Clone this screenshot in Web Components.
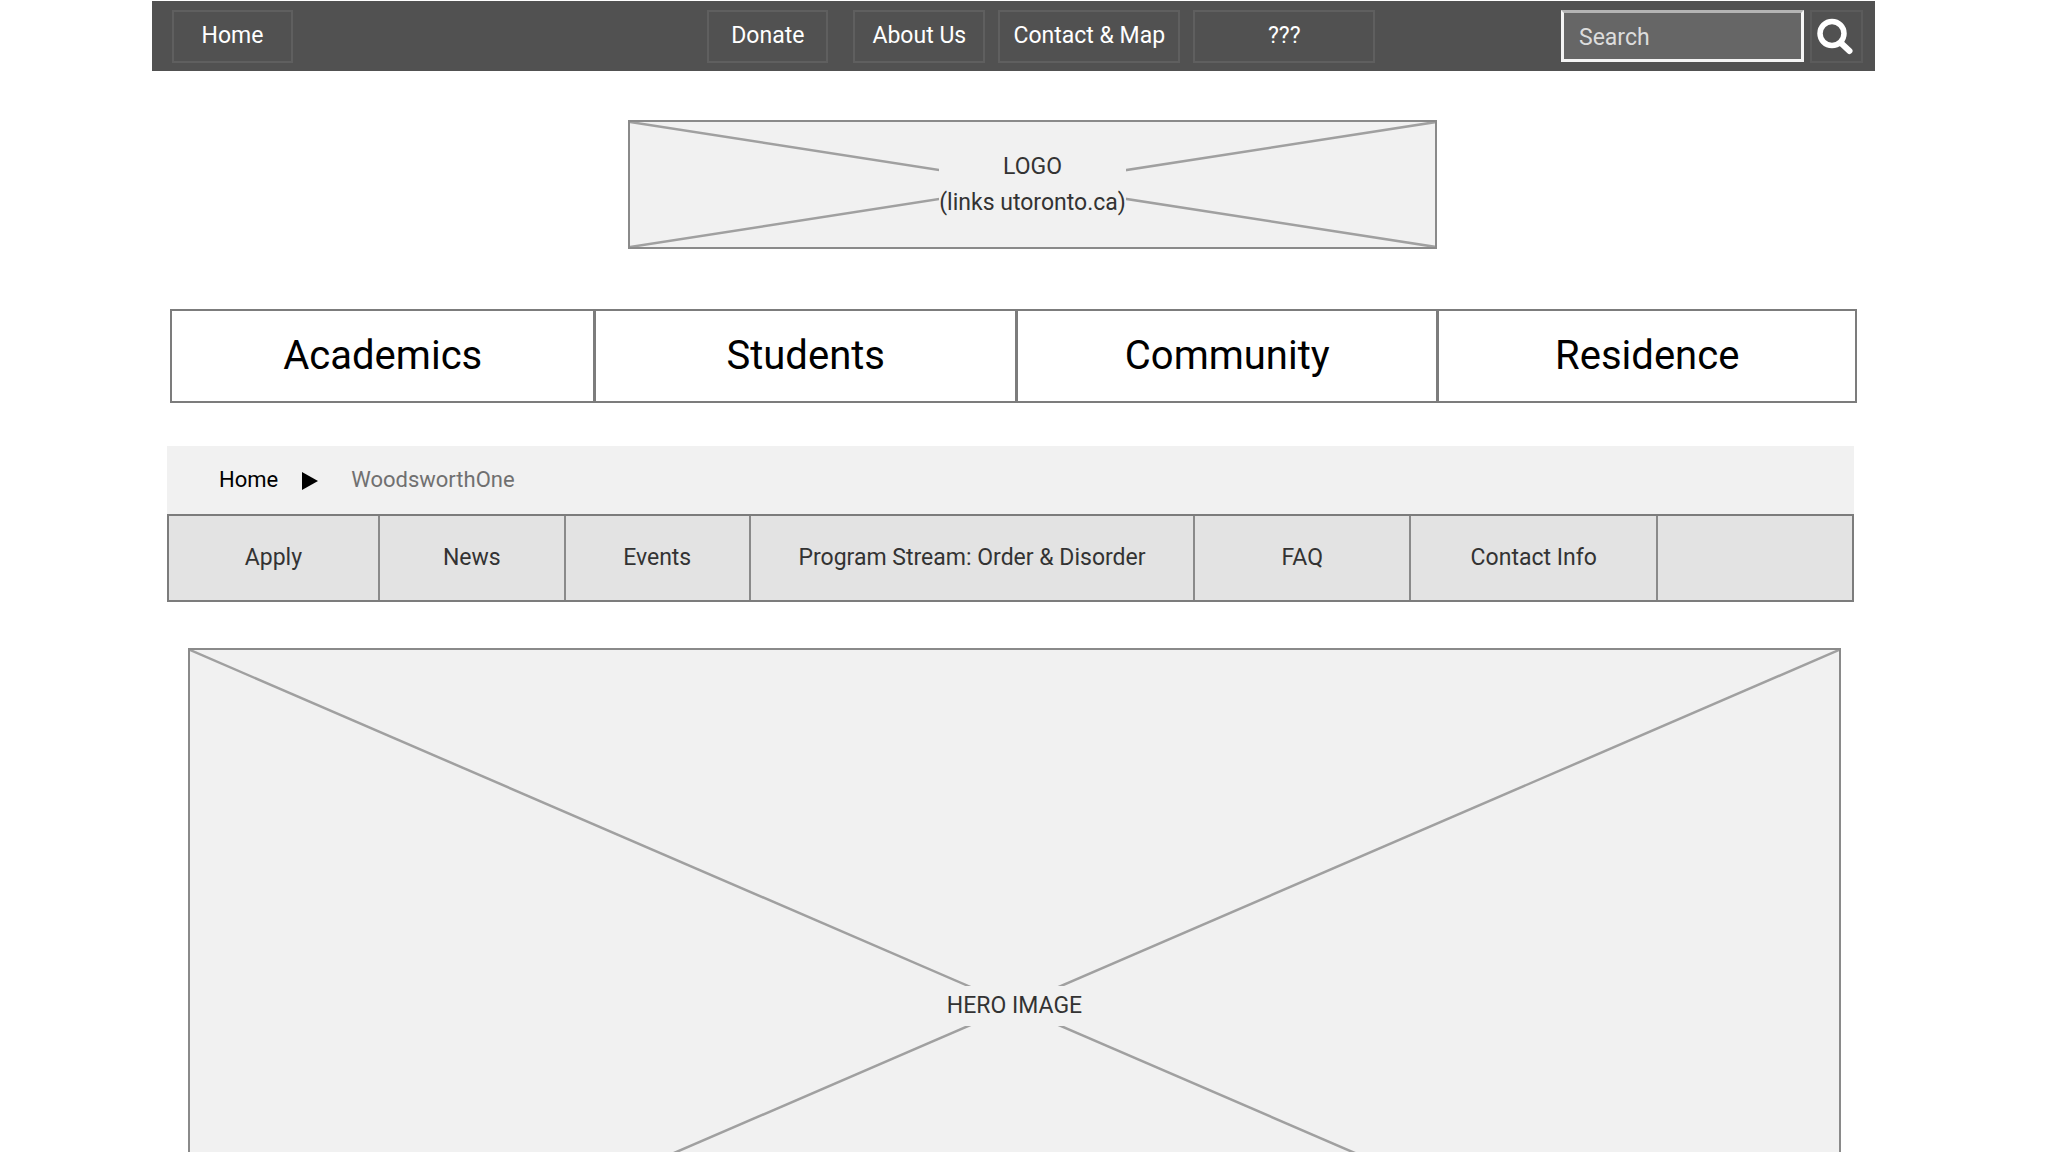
<!DOCTYPE html>
<html lang="en">
<head>
<meta charset="utf-8">
<title>WoodsworthOne</title>
<style>
  body {
    margin: 0;
    background: #fff;
    color: #333;
    font: 23px/36px Roboto, "Liberation Sans", sans-serif;
    --line: #7c7c7c;
    --panel: #f1f1f1;
  }
</style>
</head>
<body>
<wf-page>
  <wf-topbar></wf-topbar>
  <wf-placeholder class="logo" href="#utoronto">LOGO<br>(links utoronto.ca)</wf-placeholder>
  <wf-tabs></wf-tabs>
  <wf-section-nav></wf-section-nav>
  <wf-placeholder class="hero">HERO IMAGE</wf-placeholder>
</wf-page>

<script>
const define = (name, html) => {
  const template = document.createElement('template');
  template.innerHTML = '<style>*{box-sizing:border-box}a{color:inherit;text-decoration:none}</style>' + html;
  customElements.define(name, class extends HTMLElement {
    constructor() {
      super();
      this.attachShadow({ mode: 'open' }).append(template.content.cloneNode(true));
    }
    connectedCallback() {
      const link = this.shadowRoot.querySelector('a[data-host]');
      if (link && this.hasAttribute('href')) link.href = this.getAttribute('href');
    }
  });
};

define('wf-page', `
  <style>
    :host { display: flex; flex-direction: column; padding: 1px 173px 0 152px; }
    ::slotted(wf-tabs) { margin: 60px 18px 0; }
    ::slotted(wf-section-nav) { margin: 43px 21px 0 15px; }
    ::slotted(.logo) { align-self: center; width: 47%; height: 129px; margin: 49px 0 0 38px; --label-width: 184px; --label-height: 72px; }
    ::slotted(.hero) { margin: 46px 34px 0 36px; aspect-ratio: 1653 / 716; --label-width: 160px; --label-height: 40px; }
  </style>
  <slot></slot>`);

define('wf-topbar', `
  <style>
    :host { display: flex; align-items: center; height: 70px; padding: 0 12px 0 20px; background: #515151; color: #fff; }
    a { display: flex; align-items: center; justify-content: center; height: 53px; border: 2px solid #5f5f5f; }
    nav { display: contents; }
    .s { width: 121px; } .m { width: 132px; } .l { width: 182px; }
    .links { display: flex; gap: 13px; }
    .links .s { margin-right: 12px; }
    .wide { flex: 415; } .narrow { flex: 186; }
    form { display: flex; align-items: center; gap: 6px; margin: 0; }
    input { width: 243px; height: 52px; margin: 0; padding: 2px 15px 0; border: 3px solid #f4f4f4; border-top-color: #b4b4b4; border-radius: 0; background: #666; color: #fff; font: inherit; outline: 0; }
    input::placeholder { color: #dcdcdc; opacity: 1; }
    button { width: 53px; height: 53px; padding: 0; border: 2px solid #5b5b5b; background: none; color: #fff; }
    svg { display: block; width: 49px; height: 49px; }
  </style>
  <nav aria-label="Utility">
    <a class="s" href="#home">Home</a>
    <span class="wide"></span>
    <div class="links">
      <a class="s" href="#donate">Donate</a>
      <a class="m" href="#about">About Us</a>
      <a class="l" href="#contact">Contact &amp; Map</a>
      <a class="l" href="#more">???</a>
    </div>
    <span class="narrow"></span>
  </nav>
  <form role="search">
    <input type="text" placeholder="Search" aria-label="Search">
    <button type="button" aria-label="Search">
      <svg viewBox="0 0 49 49" fill="none" stroke="currentColor" stroke-linecap="round">
        <circle cx="20" cy="21.5" r="12" stroke-width="5.5"/>
        <path d="M29.5 31.5 37.5 39" stroke-width="6"/>
      </svg>
    </button>
  </form>`);

define('wf-placeholder', `
  <style>
    :host { display: grid; box-sizing: border-box; border: 2px solid #8a8a8a; background: var(--panel); }
    svg, a { grid-area: 1 / 1; }
    svg { width: 100%; height: 100%; min-height: 0; stroke: #a0a0a0; stroke-width: 2.5; }
    a { place-self: center; display: grid; align-content: center; min-width: var(--label-width); height: var(--label-height); background: var(--panel); text-align: center; white-space: nowrap; }
  </style>
  <svg aria-hidden="true">
    <line x1="0" y1="0" x2="100%" y2="100%"/>
    <line x1="0" y1="100%" x2="100%" y2="0"/>
  </svg>
  <a data-host><span><slot></slot></span></a>`);

define('wf-tabs', `
  <style>
    :host { display: block; color: #000; font-size: 40px; line-height: 48px; }
    nav { display: grid; grid-template-columns: 422fr 422fr 422fr 419fr; height: 94px; border: 2px solid var(--line); }
    a { display: grid; place-items: center; }
    a + a { border-left: 3px solid var(--line); }
  </style>
  <nav aria-label="Main">
    <a href="#academics">Academics</a>
    <a href="#students">Students</a>
    <a href="#community">Community</a>
    <a href="#residence">Residence</a>
  </nav>`);

define('wf-section-nav', `
  <style>
    :host { display: block; }
    .crumbs { display: flex; align-items: center; height: 68px; padding: 0 52px; background: var(--panel); color: #000; font-size: 22px; }
    svg { width: 16px; height: 18px; margin: 2px 33px 0 24px; }
    .here { color: #707070; }
    .items { display: grid; grid-template-columns: 209fr 186fr 185fr 445fr 216fr 247fr 196fr; height: 88px; border: 2px solid var(--line); background: #e3e3e3; }
    .items > * { display: grid; place-items: center; }
    .items > * + * { border-left: 2px solid #8a8a8a; }
  </style>
  <nav class="crumbs" aria-label="Breadcrumb">
    <a href="#home">Home</a>
    <svg viewBox="0 0 16 18" aria-hidden="true"><path d="M0 0 16 9 0 18Z"/></svg>
    <span class="here">WoodsworthOne</span>
  </nav>
  <nav class="items" aria-label="Section">
    <a href="#apply">Apply</a>
    <a href="#news">News</a>
    <a href="#events">Events</a>
    <a href="#program">Program Stream: Order &amp; Disorder</a>
    <a href="#faq">FAQ</a>
    <a href="#info">Contact Info</a>
    <span></span>
  </nav>`);
</script>
</body>
</html>
